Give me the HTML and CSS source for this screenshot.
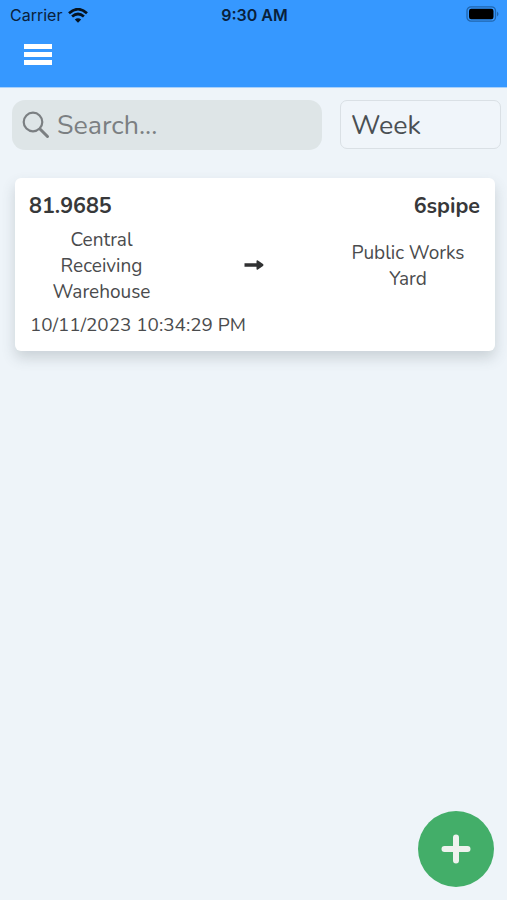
FILE: index.html
```html
<!DOCTYPE html>
<html lang="en">

<head>
    <meta charset="UTF-8">
    <meta name="viewport" content="width=device-width, initial-scale=1.0">
    <title>Transfers</title>
    <link rel="stylesheet" href="styles.css">
</head>

<body>

    <!-- Header -->
    <header class="header">
        <div class="status-bar">
            <div class="carrier">
                <span>Carrier</span>
                <svg class="wifi" viewBox="0 0 20 15">
                    <path d="M1 5.2Q10-2.8 19 5.2M4.1 8.6Q10 3.4 15.9 8.6" />
                    <path class="dot" d="M10 14.8L6.8 11.6Q10 8.8 13.2 11.6Z" />
                </svg>
            </div>
            <span class="time">9:30 AM</span>
            <svg class="battery" viewBox="0 0 33 16">
                <rect class="shell" x="1" y=".8" width="28.5" height="14.4" rx="4" />
                <rect x="3" y="2.8" width="24.5" height="10.4" rx="2.2" />
                <path class="cap" d="M31 5.5Q34 8 31 10.5Z" />
            </svg>
        </div>
        <button class="menu-btn" aria-label="Menu">
            <span></span>
            <span></span>
            <span></span>
        </button>
    </header>

    <!-- Search and period filter -->
    <div class="filters">
        <label class="search">
            <svg viewBox="0 0 28 28">
                <circle cx="11" cy="11" r="9.3" />
                <path class="handle" d="M18 18L25.5 25.5" />
            </svg>
            <input type="text" placeholder="Search...">
        </label>
        <button class="period">Week</button>
    </div>

    <!-- Transfer list -->
    <main class="list">
        <div class="card">
            <div class="card-top">
                <span class="amount">81.9685</span>
                <span class="item">6spipe</span>
            </div>
            <div class="route">
                <div class="place">Central<br>Receiving<br>Warehouse</div>
                <svg class="arrow" viewBox="0 0 20 10">
                    <path d="M.5 3.3H12.5V1.2Q12.5-.2 13.9.4L19 4.1Q19.9 5 19 5.9L13.9 9.6Q12.5 10.2 12.5 8.8V6.7H.5Z" />
                </svg>
                <div class="place">Public Works<br>Yard</div>
            </div>
            <div class="date">10/11/2023 10:34:29 PM</div>
        </div>
    </main>

    <button class="add-btn" aria-label="Add">
        <svg viewBox="0 0 30 30">
            <path d="M15 3.5V26.5M3.5 15H26.5" />
        </svg>
    </button>

</body>

</html>
```

FILE: styles.css
```css
* {
    box-sizing: border-box;
}

body {
    margin: 0;
    min-height: 900px;
    background: #eef4f9;
    color: #4a4b4d;
    font-family: Nunito, Lato, sans-serif;
}

button {
    border: none;
    font-family: inherit;
    cursor: pointer;
}

.header {
    height: 88px;
    background: #3698ff;
    border-bottom: 1px solid #a9d1fb;
}

.status-bar {
    display: grid;
    grid-template-columns: 1fr auto 1fr;
    align-items: center;
    height: 30px;
    padding: 0 8px 0 10px;
    color: #09213b;
    font-family: Inter, sans-serif;
    font-size: 16px;
}

.carrier {
    display: flex;
    align-items: center;
    gap: 6px;
}

.wifi {
    width: 20px;
    height: 15px;
    fill: none;
    stroke: #061320;
    stroke-width: 2.7;
}

.wifi .dot {
    fill: #061320;
    stroke: none;
}

.time {
    padding-bottom: 1px;
    font-weight: 600;
}

.battery {
    justify-self: end;
    width: 33px;
    height: 16px;
    margin-bottom: 2px;
}

.battery .shell {
    fill: none;
    stroke: #2065ae;
    stroke-width: 1.3;
}

.battery .cap {
    fill: #2065ae;
}

.menu-btn {
    display: flex;
    flex-direction: column;
    gap: 3px;
    margin: 14px 0 0 24px;
    padding: 0;
    background: none;
}

.menu-btn span {
    width: 28px;
    height: 5px;
    background: #fff;
}

.filters {
    display: flex;
    gap: 18px;
    padding: 12px 6px 0 12px;
}

.search {
    display: flex;
    align-items: center;
    gap: 7px;
    width: 310px;
    height: 50px;
    padding-left: 10px;
    border-radius: 13px;
    background: #dee5e7;
}

.search svg {
    flex: none;
    width: 28px;
    height: 28px;
    fill: none;
    stroke: #7b7f82;
    stroke-width: 2.2;
}

.search .handle {
    stroke-width: 3;
    stroke-linecap: round;
}

.search input {
    width: 240px;
    padding: 0;
    border: none;
    outline: none;
    background: none;
    font: 26.8px Nunito, Lato, sans-serif;
}

.search input::placeholder {
    color: #7b7f82;
}

.period {
    flex: 1;
    height: 49px;
    padding: 0 0 0 10px;
    border: 1px solid #dae0e5;
    border-radius: 7px;
    background: #f0f5fa;
    color: #4a4f53;
    font-size: 26.8px;
    text-align: left;
}

.list {
    padding: 28px 12px 0 15px;
}

.card {
    height: 173px;
    padding: 13px 15px 0 14px;
    border-radius: 6px;
    background: #fff;
    box-shadow: 0 7px 14px rgba(60, 75, 80, 0.2);
}

.card-top {
    display: flex;
    justify-content: space-between;
    color: #37383a;
    font-size: 21.5px;
    font-weight: 700;
    line-height: 30px;
}

.route {
    display: grid;
    grid-template-columns: 145px 1fr 144px;
    align-items: center;
    height: 90px;
}

.place {
    font-size: 19px;
    line-height: 26px;
    text-align: center;
}

.arrow {
    justify-self: center;
    width: 20px;
    height: 10px;
    margin: 0 2px 2px 0;
    fill: #303132;
}

.date {
    padding-left: 1px;
    font-size: 18.9px;
    line-height: 28px;
}

.add-btn {
    position: fixed;
    right: 13px;
    bottom: 13px;
    display: grid;
    place-items: center;
    width: 76px;
    height: 76px;
    padding: 0;
    border-radius: 50%;
    background: #43ae69;
}

.add-btn svg {
    width: 30px;
    height: 30px;
    stroke: #eef2ee;
    stroke-width: 6;
    stroke-linecap: round;
}
```
